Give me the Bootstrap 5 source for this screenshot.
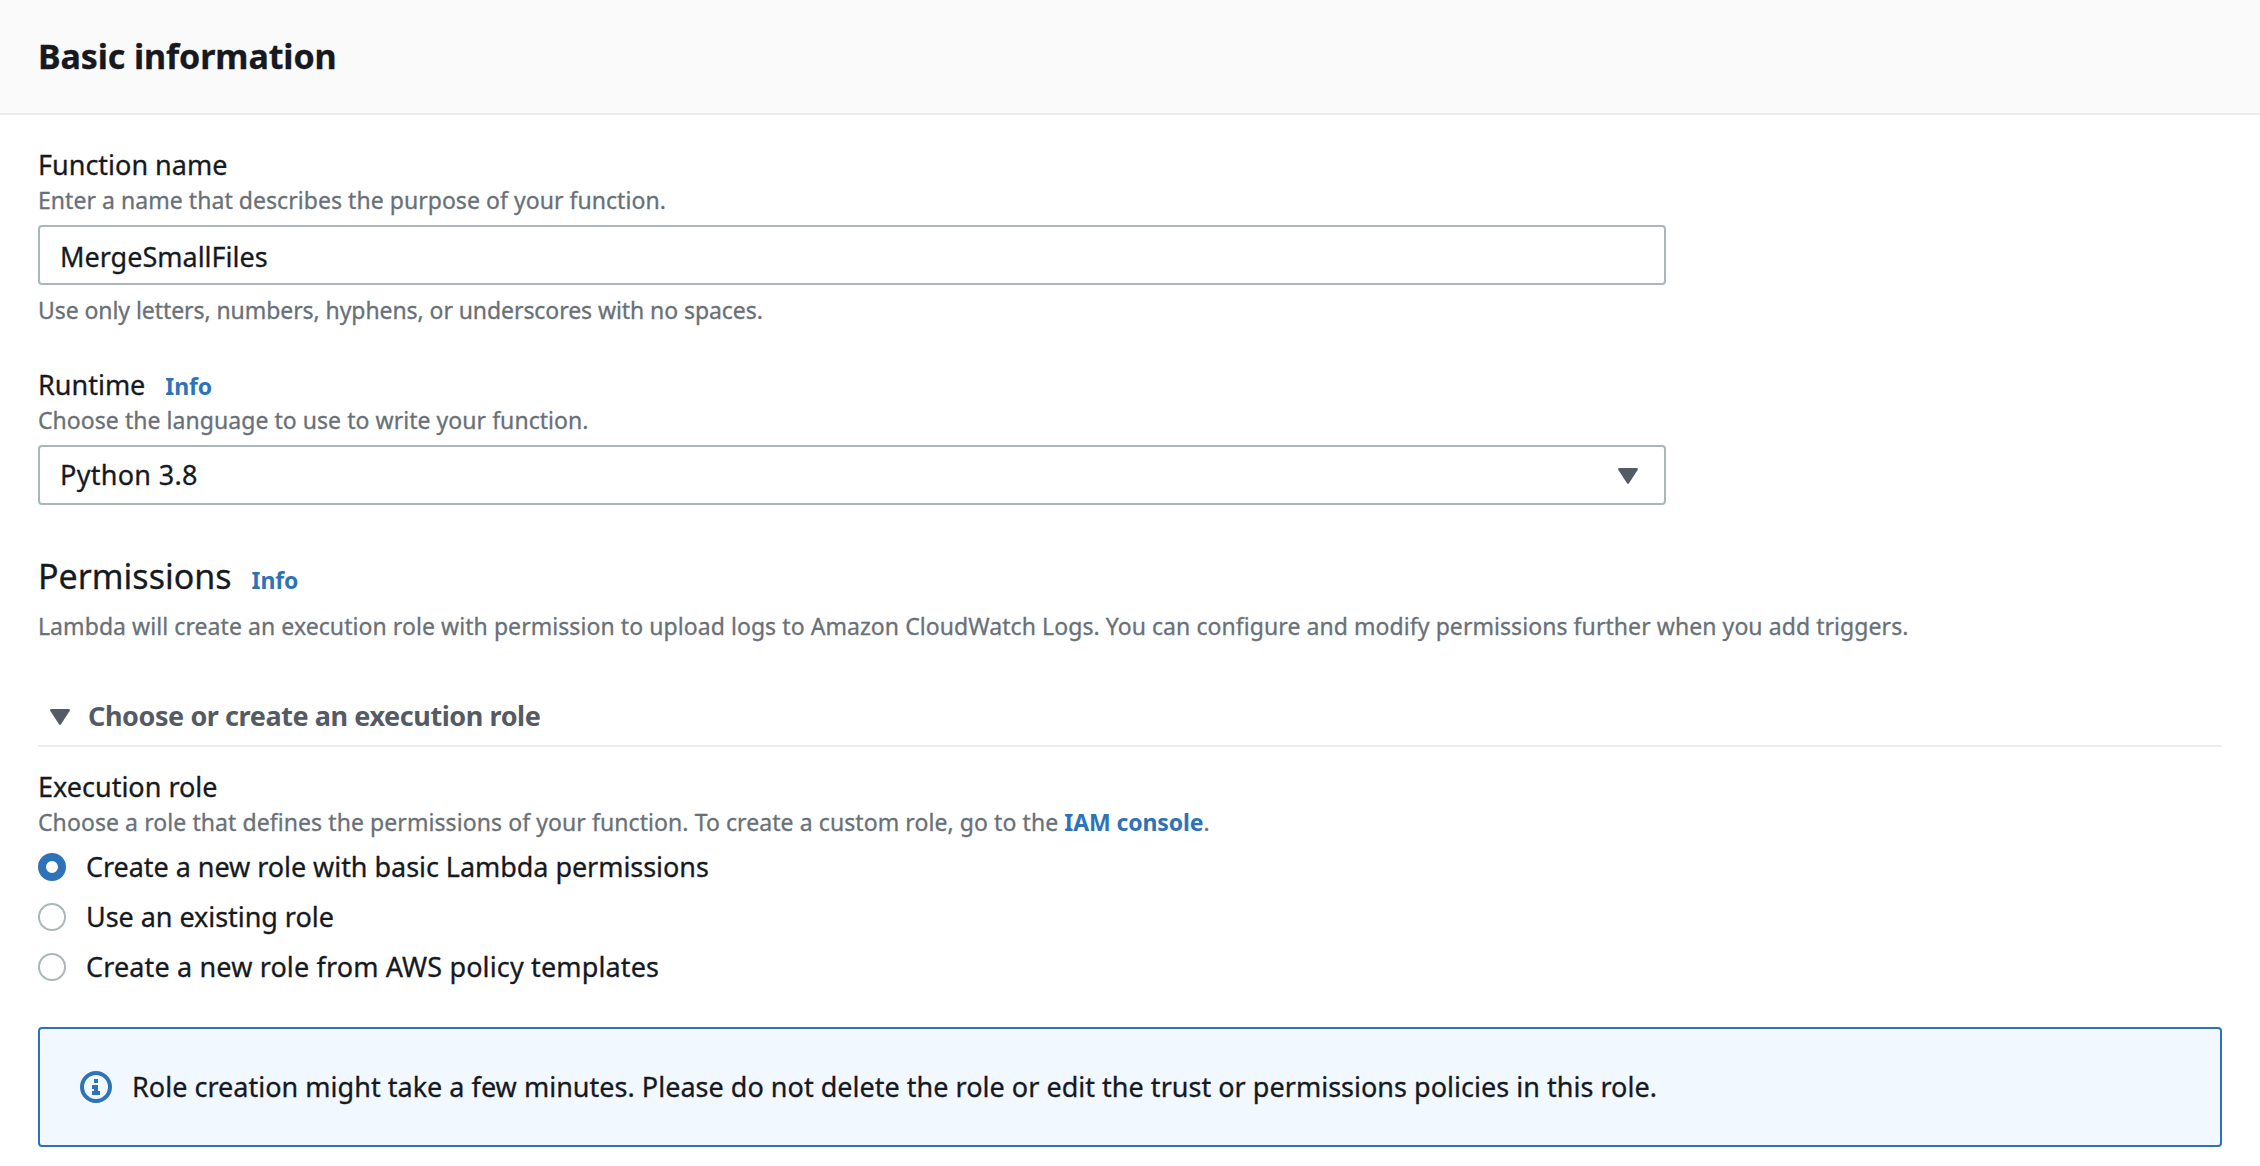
<!DOCTYPE html>
<html lang="en">
<head>
<meta charset="utf-8">
<title>Create function</title>
<link href="https://cdn.jsdelivr.net/npm/bootstrap@5.3.0/dist/css/bootstrap.min.css" rel="stylesheet">
<style>
  body { font-family: "Noto Sans", "Open Sans", sans-serif; font-size: 27px; line-height: 40px; color: #16191f; background: #fff; -webkit-text-stroke: .3px; }
  .panel-head { height: 115px; padding: 0 38px 2px; background: #fafafa; border-bottom: 2px solid #eaeded; }
  .panel-head h2 { font-size: 34px; line-height: 44px; font-weight: 700; letter-spacing: -.1px; }
  .panel-body { padding: 29px 38px 0; }
  .field { width: 1628px; }
  .runtime-field { margin-top: 38px; }
  .field-label { font-size: 27px; line-height: 38px; padding-top: 2px; }
  .field-hint { font-size: 23px; line-height: 32px; color: #687078; letter-spacing: .05px; }
  .hint-below { margin-top: 9px; letter-spacing: -.07px; }
  .hint-wide { margin-top: 12px; letter-spacing: .07px; }
  .role-hint { letter-spacing: .08px; }
  .info-link { font-size: 23px; line-height: 1; font-weight: 700; color: #2e73b8; text-decoration: none; margin-left: 20px; letter-spacing: -.1px; -webkit-text-stroke: 0; }
  .field-box.form-control, .field-box.form-select { height: 60px; margin-top: 9px; padding: 2px 20px 0; border: 2px solid #aab7b8; border-radius: 4px; font-size: 27px; line-height: 54px; color: #16191f; }
  .field-box.form-control { -webkit-text-stroke: .3px; }
  .field-box.form-select { padding-top: 0; line-height: 56px; background-image: none; cursor: pointer; letter-spacing: .3px; }
  .field-box.form-select svg { margin-right: 6px; margin-top: 1px; }
  .caret { width: 20px; height: 16px; fill: #545b64; flex: none; }
  .permissions { margin-top: 49px; }
  .section-title { font-size: 34px; line-height: 44px; font-weight: 400; }
  .expander { margin-top: 54px; height: 51px; border-bottom: 2px solid #eaeded; color: #545b64; font-size: 27px; font-weight: 700; padding-left: 12px; gap: 18px; letter-spacing: -.42px; border-radius: 2px; -webkit-text-stroke: 0; }
  .expander .caret { margin-top: 13px; }
  .role-section { margin-top: 19px; }
  .role-option.form-check { height: 50px; margin: 0; padding: 0; min-height: 0; gap: 20px; letter-spacing: -.05px; }
  .role-option.opt-templates { letter-spacing: .14px; }
  .role-option .form-check-input { width: 28px; height: 28px; float: none; margin: 0; border: 2px solid #aab7b8; background-image: none; flex: none; }
  .role-option .form-check-input:checked { border: 8px solid #2e73b8; background-color: #fff; }
  .notice.alert { margin: 35px 0 0; height: 120px; padding: 0 40px; background: #f1f8ff; border: 2px solid #2e73b8; border-radius: 4px; color: #16191f; gap: 20px; letter-spacing: .02px; }
</style>
</head>
<body>
<header class="panel-head d-flex align-items-center">
  <h2 class="m-0">Basic information</h2>
</header>
<main class="panel-body">
  <div class="field">
    <label class="field-label d-block" for="fn">Function name</label>
    <div class="field-hint">Enter a name that describes the purpose of your function.</div>
    <input id="fn" class="form-control field-box" type="text" value="MergeSmallFiles">
    <div class="field-hint hint-below">Use only letters, numbers, hyphens, or underscores with no spaces.</div>
  </div>
  <div class="field runtime-field">
    <div class="field-label">Runtime<a class="info-link" href="#">Info</a></div>
    <div class="field-hint">Choose the language to use to write your function.</div>
    <div class="form-select field-box d-flex justify-content-between align-items-start" role="button">
      <span>Python 3.8</span>
      <svg class="caret align-self-center" viewBox="0 0 20 16"><path d="M1.5 0h17Q20.600 .2 19.600 2L11 15.300Q10 16.500 9 15.300L.4 2Q-.6 .2 1.500 0Z"/></svg>
    </div>
  </div>
  <section class="permissions">
    <h3 class="section-title m-0">Permissions<a class="info-link" href="#">Info</a></h3>
    <div class="field-hint hint-wide">Lambda will create an execution role with permission to upload logs to Amazon CloudWatch Logs. You can configure and modify permissions further when you add triggers.</div>
  </section>
  <div class="expander d-flex align-items-start">
    <svg class="caret" viewBox="0 0 20 16"><path d="M1.5 0h17Q20.600 .2 19.600 2L11 15.300Q10 16.500 9 15.300L.4 2Q-.6 .2 1.500 0Z"/></svg>
    <span>Choose or create an execution role</span>
  </div>
  <section class="role-section">
    <div class="field-label">Execution role</div>
    <div class="field-hint role-hint">Choose a role that defines the permissions of your function. To create a custom role, go to the <a class="info-link m-0" href="#">IAM console</a>.</div>
    <div class="pt-1">
      <div class="form-check role-option d-flex align-items-center">
        <input class="form-check-input" type="radio" name="role" id="r1" checked>
        <label class="form-check-label" for="r1">Create a new role with basic Lambda permissions</label>
      </div>
      <div class="form-check role-option d-flex align-items-center">
        <input class="form-check-input" type="radio" name="role" id="r2">
        <label class="form-check-label" for="r2">Use an existing role</label>
      </div>
      <div class="form-check role-option opt-templates d-flex align-items-center">
        <input class="form-check-input" type="radio" name="role" id="r3">
        <label class="form-check-label" for="r3">Create a new role from AWS policy templates</label>
      </div>
    </div>
  </section>
  <div class="alert notice d-flex align-items-center" role="alert">
    <svg class="flex-shrink-0" width="32" height="32" viewBox="0 0 32 32"><circle cx="16" cy="16" r="14" fill="#f1f8ff" stroke="#2e73b8" stroke-width="4"/><path fill="#2e73b8" d="M14 8h4v4h-4zM12 14h6v6h2v4h-8v-4h2v-2h-2z"/></svg>
    <span>Role creation might take a few minutes. Please do not delete the role or edit the trust or permissions policies in this role.</span>
  </div>
</main>
<script src="https://cdn.jsdelivr.net/npm/bootstrap@5.3.0/dist/js/bootstrap.bundle.min.js"></script>
</body>
</html>
